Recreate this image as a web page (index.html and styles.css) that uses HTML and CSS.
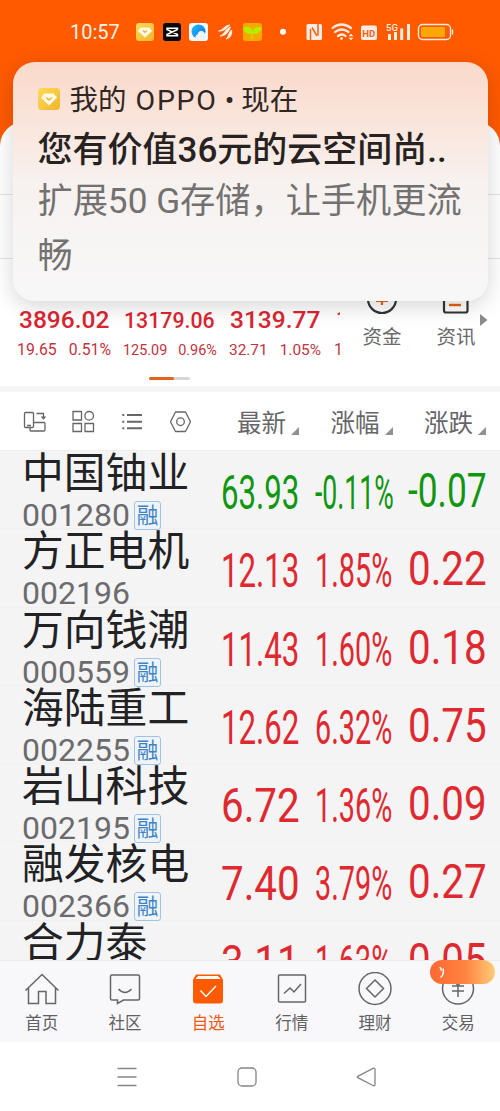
FILE: index.html
```html
<!DOCTYPE html>
<html lang="zh-CN">
<head>
<meta charset="utf-8">
<title>自选</title>
<link rel="stylesheet" href="styles.css">
</head>
<body>
<div class="phone">
  <header class="status">
    <span class="time">10:57</span>
    <svg class="status-icons" width="390" height="30" viewBox="110 17 390 30">
      <defs>
        <linearGradient id="gold" x1="0" y1="0" x2="1" y2="1"><stop offset="0" stop-color="#ffdc58"/><stop offset="1" stop-color="#efb52b"/></linearGradient>
        <linearGradient id="blue" x1="0" y1="0" x2="1" y2="1"><stop offset="0" stop-color="#1cc4f5"/><stop offset="1" stop-color="#1467e8"/></linearGradient>
      </defs>
      <rect x="136" y="23" width="18" height="18" rx="3" fill="url(#gold)"/>
      <path d="M140.500 27.500h9l2.500 3.500-7 6.500-7-6.500z" fill="#fffbe8"/><path d="M143 30.500l2 1.800 2-1.800" fill="none" stroke="#edb52e" stroke-width="1.300"/>
      <rect x="163" y="23" width="18" height="18" rx="3" fill="#0a0505"/>
      <path d="M177.500 29.500V28.200H167V29.500l10.500 5V35.800H167V34.500l10.500-5" fill="none" stroke="#fff" stroke-width="1.500"/>
      <rect x="189" y="23" width="19" height="18" rx="3" fill="#f4faff"/>
      <circle cx="198.500" cy="31.500" r="7" fill="url(#blue)"/>
      <path d="M197 40q-2.500-1-1.500-3.500.3-2 2.200-2.300.8-3.700 4.300-3.200 2.800.5 3 3.500 2 1.500.5 4-1 1.500-3 1.500z" fill="#eaf6ff"/>
      <path d="M218.500 31c5-1 6-6 11.500-6-3 2-5 6.500-11.500 6zM220 36c5-2 5-7 10.500-9-1.500 4-4 9-10.500 9zM226 39c3-2 2-6 5.500-9 1 4-1 8-5.500 9z" fill="#fff5eb" stroke="#fff5eb" stroke-width=".8"/>
      <rect x="243" y="23" width="19" height="18" rx="3" fill="#f6a900"/>
      <path d="M252 39v-8M244 28c5-2 8 0 8 5-5 1-8-1-8-5zM253 33c0-5 3-6 8-5-1 4-4 6-8 5z" fill="#aef000" stroke="#b9f200"/>
      <circle cx="283" cy="31.700" r="3" fill="#fff"/>
      <g fill="none" stroke="#ffede2">
        <rect x="306.500" y="24" width="15.500" height="16" rx="1.500" fill="#ffede2" stroke="none"/>
        <path d="M310.500 40V29M318 24v11.500M312 27.500l5 8.500" stroke="#f9601a" stroke-width="1.500"/>
        <path d="M332.500 28q9-7 18.500 0M335 32q6.500-5 13.500 0M338 36q4-3 7.500 0" stroke-width="2.200" stroke-linecap="round"/>
        <circle cx="341.500" cy="38.500" r="1" fill="#ffede2"/>
        <path d="M348.500 36.200l2.500-2.500 2.500 2.500zM348.500 37.800l2.500 2.500 2.500-2.500z" fill="#ffede2" stroke="none"/>
        <rect x="361" y="25.500" width="16" height="14.500" rx="2" fill="#ffede2" stroke="none"/>
        <path d="M389.500 34v6M395.500 32v8M401.700 28.500V40M408.500 24v16" stroke-width="3"/>
        <rect x="418.500" y="24.500" width="32" height="15" rx="4" stroke-width="1.400"/>
        <path d="M452.500 29.500v5" stroke-width="1.300"/>
        <rect x="421" y="27" width="24" height="10" rx="1" fill="#ffa800" stroke="none"/>
      </g>
      <text x="362.300" y="36.600" class="hd">HD</text>
      <text x="386" y="31" class="net">5G</text>
    </svg>
  </header>

  <section class="market">
    <div class="divider"></div>
    <div class="divider second"></div>
    <div class="quotes">
      <div class="indices">
        <div class="index"><b>3896.02</b><p><span>19.65</span><span>0.51%</span></p></div>
        <div class="index slim"><b>13179.06</b><p><span>125.09</span><span>0.96%</span></p></div>
        <div class="index third"><b>3139.77</b><p><span>32.71</span><span>1.05%</span></p></div>
        <div class="index cut"><b>1</b><p><span>1</span></p></div>
      </div>
      <div class="shortcut">
        <svg width="40" height="32" viewBox="0 0 40 32" fill="none"><circle cx="20" cy="12" r="14" stroke="#333338" stroke-width="2.200"/><path d="M14 14h12M20 6v12" stroke="#e8600f" stroke-width="2.200"/></svg>
        <span>资金</span>
      </div>
      <div class="shortcut">
        <svg width="40" height="32" viewBox="0 0 40 32" fill="none"><rect x="8" y="0" width="23.500" height="25.500" rx="2" stroke="#333338" stroke-width="2.200"/><path d="M13 18h12" stroke="#e8600f" stroke-width="2.400"/></svg>
        <span>资讯</span>
      </div>
      <svg class="more" width="10" height="14" viewBox="0 0 10 14"><path d="M1 1l7.500 6L1 13z" fill="#8b8b8b"/></svg>
    </div>
    <div class="pager"><i></i></div>
  </section>

  <section class="toolbar">
    <svg class="tools" width="180" height="30" viewBox="20 407 180 30" fill="none" stroke="#66666a" stroke-width="1.300">
      <rect x="24.500" y="412.500" width="9" height="15" rx="1"/><path d="M27 425.500h4M36.500 413.500h7v5m-2-2 2 2.200 2-2.200M36 422.500h8q1 0 1 1v6.500q0 1-1 1H31q-1 0-1-1v-2.500M34 422.500h3"/>
      <path d="M73 411.500h8.500v8.500H73zM73 423.500h8.500v8H73zM85 423.500h8.500v8H85z"/><circle cx="89.200" cy="415.800" r="4.300"/>
      <path d="M127 415h15M127 421.700h15M127 428.300h15M122.300 415h2M122.300 421.700h2M122.300 428.300h2" stroke-width="1.900"/>
      <path d="M175.500 412h10l5 9.700-5 9.800h-10l-5-9.800z" stroke-linejoin="round"/><circle cx="180.500" cy="421.700" r="3.800"/>
    </svg>
    <span class="sort">最新</span><span class="sort">涨幅</span><span class="sort">涨跌</span>
  </section>

  <main class="stocks">
    <article class="stock down"><div class="who"><h2>中国铀业</h2><p>001280<em>融</em></p></div><span style="--sx:.65">63.93</span><span style="--sx:.555">-0.11%</span><span style="--sx:.735">-0.07</span></article>
    <article class="stock"><div class="who"><h2>方正电机</h2><p>002196</p></div><span style="--sx:.65">12.13</span><span style="--sx:.60">1.85%</span><span style="--sx:.84">0.22</span></article>
    <article class="stock"><div class="who"><h2>万向钱潮</h2><p>000559<em>融</em></p></div><span style="--sx:.65">11.43</span><span style="--sx:.60">1.60%</span><span style="--sx:.84">0.18</span></article>
    <article class="stock"><div class="who"><h2>海陆重工</h2><p>002255<em>融</em></p></div><span style="--sx:.65">12.62</span><span style="--sx:.60">6.32%</span><span style="--sx:.84">0.75</span></article>
    <article class="stock"><div class="who"><h2>岩山科技</h2><p>002195<em>融</em></p></div><span style="--sx:.84">6.72</span><span style="--sx:.60">1.36%</span><span style="--sx:.84">0.09</span></article>
    <article class="stock"><div class="who"><h2>融发核电</h2><p>002366<em>融</em></p></div><span style="--sx:.84">7.40</span><span style="--sx:.60">3.79%</span><span style="--sx:.84">0.27</span></article>
    <article class="stock"><div class="who"><h2>合力泰</h2></div><span style="--sx:.84">3.11</span><span style="--sx:.60">1.63%</span><span style="--sx:.84">0.05</span></article>
  </main>

  <nav class="tabs">
    <a><svg width="36" height="36" viewBox="0 0 36 36"><path d="M1.500 18.500L18 2.500l16.500 16M4.500 16v15.500h10V19.500h7.500v12h9.500V16"/></svg>首页</a>
    <a><svg width="36" height="36" viewBox="0 0 36 36"><path d="M5 3h26q1.500 0 1.500 1.500v22q0 1.500-1.500 1.500H16.500l-6 3.500V28H5q-1.500 0-1.500-1.500v-22Q3.500 3 5 3zM11.500 17q6.500 7 13 0"/></svg>社区</a>
    <a class="on"><svg width="36" height="36" viewBox="0 0 36 36"><path d="M6 2.500h24l3 5v21q0 3-3 3H6q-3 0-3-3v-21z" fill="#ff5a00" stroke="none"/><path d="M5.500 7L8 4h20l2.500 3z" fill="#fff" stroke="none"/><path d="M10.500 18.500l5.500 6 10-10.500" stroke="#fff"/></svg>自选</a>
    <a><svg width="36" height="36" viewBox="0 0 36 36"><rect x="4.500" y="3" width="27" height="27" rx="1"/><path d="M10 21.500l6-5.500 4 4 7-8"/></svg>行情</a>
    <a><svg width="36" height="36" viewBox="0 0 36 36"><circle cx="18" cy="16.500" r="16"/><path d="M18 8l8.500 8.500L18 25l-8.500-8.500z"/></svg>理财</a>
    <a><svg width="36" height="36" viewBox="0 0 36 36"><circle cx="18" cy="16.500" r="15.500"/><path d="M13 8l5 5.500L23 8M12 14h12M12 19h12M18 13.500V25"/></svg>交易<i class="promo"><svg width="8" height="13" viewBox="0 0 8 13"><path d="M2 1l1.500 3.500M5 2.500q1.500 6-2.500 9" fill="none" stroke="#fff" stroke-width="1.500"/></svg></i></a>
  </nav>

  <footer class="system">
    <svg width="22" height="22" viewBox="0 0 22 22"><path d="M1.500 2.500h19M1.500 11h19M1.500 19.500h19"/></svg>
    <svg width="22" height="22" viewBox="0 0 22 22"><rect x="2" y="2" width="18" height="18" rx="4"/></svg>
    <svg width="22" height="22" viewBox="0 0 22 22"><path d="M2.700 10.300L18 2.300q2-.6 2 1.200v15q0 1.800-2 1L2.700 11.700q-.8-.7 0-1.400z"/></svg>
  </footer>

  <aside class="notice">
    <div class="app"><svg width="22" height="22" viewBox="0 0 22 22"><rect width="22" height="22" rx="4" fill="url(#gold)"/><path d="M6.500 5.500h9L19 9.500l-8 8-8-8z" fill="#fffbe8"/><path d="M8 9.500l3 2.500 3-2.500" fill="none" stroke="#edb52e" stroke-width="1.500"/></svg><span>我的 <span class="brand">OPPO</span> • 现在</span></div>
    <h1>您有价值36元的云空间尚..</h1>
    <p>扩展50 G存储，让手机更流<br>畅</p>
  </aside>
</div>
</body>
</html>
```
FILE: styles.css
```css
* { box-sizing: border-box; }
body, h1, h2, p { margin: 0; }
body {
  width: 500px;
  height: 1111px;
  overflow: hidden;
  background: #fff;
  font-family: Roboto, "Noto Sans CJK SC", sans-serif;
}
.phone {
  position: relative;
  display: flex;
  flex-direction: column;
  height: 1111px;
  background: #ff5a00;
}

.status {
  display: flex;
  height: 122px;
  padding: 17px 0 0 70px;
  color: #fff3e8;
}
.time { width: 40px; font-size: 20px; line-height: 30px; white-space: nowrap; }
.status-icons { flex: none; }
.hd { font: 700 9.5px Roboto, sans-serif; fill: #f06020; }
.net { font: 500 9.5px Roboto, sans-serif; fill: #ffede2; }

.market {
  height: 264px;
  background: #fff;
  border-radius: 24px 24px 0 0;
}
.divider { height: 73px; border-bottom: 1px solid #e3e3e3; }
.second { height: 64px; }
.quotes { display: flex; height: 107px; padding: 28px 0 0 17px; }
.indices { display: flex; flex: none; width: 323px; height: 75px; margin-top: 17px; overflow: hidden; color: #da2631; }
.index { flex: none; width: 106px; }
.index b { display: block; padding-left: 2px; font-size: 24.5px; font-weight: 500; line-height: 31px; }
.index p { display: flex; gap: 12px; font-size: 15.8px; line-height: 30px; color: #c13340; }
.index.slim b { padding-left: 1px; font-size: 21.3px; line-height: 33px; }
.slim p { gap: 11px; font-size: 14.4px; line-height: 27px; }
.third { width: 105px; }
.index.third b { padding-left: 1px; }
.third p { font-size: 15.4px; gap: 12px; }
.cut { width: 30px; }
.index.cut b { padding-left: 2px; font-size: 21px; }
.shortcut {
  display: flex;
  flex: none;
  flex-direction: column;
  align-items: center;
  width: 74px;
  margin-left: 5px;
  font-size: 19.5px;
  line-height: 28px;
  color: #68686b;
}
.shortcut + .shortcut { margin-left: 0; }
.shortcut span { margin-top: 5px; }
.shortcut svg { flex: none; }
.more { flex: none; margin: 26px 0 0 -14px; }
.pager { width: 41px; height: 3px; margin: 11px 0 0 149px; background: #d6d6d8; border-radius: 2px; }
.pager i { display: block; width: 25px; height: 3px; background: #e2631c; border-radius: 2px; }

.toolbar {
  display: flex;
  height: 65px;
  padding: 21px 0 0 20px;
  background: #fff;
  border-top: 6px solid #f5f5f6;
  border-bottom: 1px solid #efeff0;
}
.tools { flex: none; margin-right: 37px; margin-top: -6px; }
.sort { position: relative; flex: none; width: 93.5px; font-size: 24.5px; line-height: 21px; color: #66666a; }
.sort::after {
  content: "";
  position: absolute;
  left: 54px;
  top: 14px;
  border-bottom: 8px solid #909092;
  border-left: 8px solid transparent;
}

.stocks { height: 509px; overflow: hidden; background: #f4f4f5; }
.stock {
  display: flex;
  height: 78.3px;
  padding-left: 22px;
  color: #df2930;
  border-bottom: 1px solid #f0f0f1;
}
.down { color: #109610; }
.who { flex: none; width: 200px; color: #222224; }
.who h2 { height: 46px; font-size: 41.8px; font-weight: 400; line-height: 45px; }
.who p { display: flex; height: 32px; font-size: 32px; line-height: 37px; color: #6b6b6d; }
.who em {
  width: 27px;
  height: 29px;
  margin: 4px 0 0 4px;
  font-size: 21.5px;
  font-style: normal;
  line-height: 28px;
  text-align: center;
  color: #3e83c3;
  background: #eef4fa;
  border: 1px solid #9fc3e4;
  border-radius: 3px;
}
.stock > span {
  flex: none;
  width: 93px;
  font-size: 48px;
  line-height: 84px;
  white-space: nowrap;
  transform: scaleX(var(--sx));
  transform-origin: 0 0;
  margin-left: -1px;
}
.stock > span:nth-of-type(3) { line-height: 80px; margin-left: 0; }
.stock > span:nth-of-type(2) { margin-left: 1px; }

.tabs {
  display: grid;
  grid-template-columns: repeat(6, 1fr);
  height: 82px;
  background: #f8f8fb;
  border-top: 1px solid #ececef;
}
.tabs a {
  position: relative;
  display: flex;
  flex-direction: column;
  align-items: center;
  padding-top: 11px;
  font-size: 16.5px;
  line-height: 31px;
  color: #606064;
}
.tabs a > svg { fill: none; stroke: #66666a; stroke-width: 1.5; }
.tabs .on { color: #ee5a12; }
.promo {
  position: absolute;
  top: -1px;
  left: 13px;
  display: flex;
  align-items: center;
  width: 65px;
  height: 24px;
  padding-left: 8px;
  background: linear-gradient(90deg, #ff6732, #ff8440 55%, #ffcc78);
  border-radius: 12px;
}

.system { display: flex; flex: 1; align-items: center; gap: 97.5px; padding-left: 116px; background: #fff; }
.system svg { fill: none; stroke: #858585; stroke-width: 1.3; }

.notice {
  position: absolute;
  top: 62px;
  left: 12.5px;
  width: 475px;
  height: 239px;
  padding: 16px 0 0 25px;
  background: linear-gradient(#fad9ca, #fae5db 25%, #f7f1ef 50%, #f7f5f4 75%, #f8f7f7);
  border-radius: 22px;
  box-shadow: 0 5px 22px rgba(0, 0, 0, .17);
  white-space: nowrap;
}
.app { display: flex; align-items: center; gap: 10px; height: 41px; font-size: 28.5px; line-height: 38px; color: #302623; }
.app > span { padding-top: 4px; }
.brand { margin-left: 2px; letter-spacing: 1.7px; }
.notice h1 { font-size: 35px; font-weight: 500; line-height: 64px; color: #27221f; }
.notice p { font-size: 35.2px; line-height: 54.500px; margin-top: -9px; color: #737170; }
```
